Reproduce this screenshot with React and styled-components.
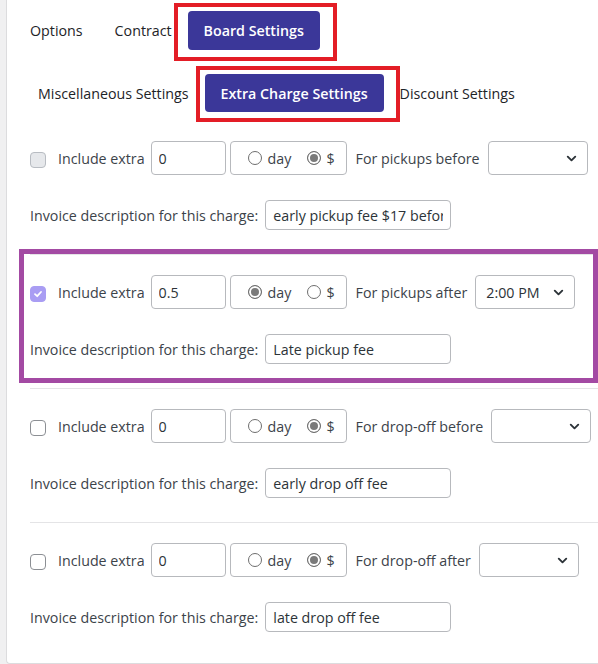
import React from 'react';
import styled, { createGlobalStyle } from 'styled-components';
import { ChevronDown } from 'lucide-react';

const GlobalStyle = createGlobalStyle`
  html, body {
    margin: 0;
    padding: 0;
    background: #f0f0f1;
    overflow: hidden;
  }
  body {
    font-family: "Open Sans", "Noto Sans", sans-serif;
    font-size: 14.25px;
    color: #3c434a;
  }
`;

const Card = styled.div`
  margin-left: 6px;
  background: #fff;
  border: 1px solid #dcdcde;
  border-top: none;
  border-right: none;
  border-radius: 0 0 0 4px;
  padding: 11px 0 0 23px;
`;

const TabRow = styled.div`
  display: flex;
  margin-left: ${props => props.$indent}px;
  margin-top: ${props => props.$top || 0}px;
`;

const Tab = styled.div`
  position: relative;
  height: ${props => props.$height}px;
  padding: 0 16px;
  display: flex;
  align-items: center;
  border-radius: 4px;
  white-space: nowrap;
  background: ${props => (props.$active ? '#3b3799' : 'transparent')};
  color: ${props => (props.$active ? '#fff' : '#1d2327')};
  font-weight: ${props => (props.$active ? 600 : 400)};

  ${props => props.$mark && `
    &::after {
      content: '';
      position: absolute;
      top: -${props.$mark[0]}px;
      right: -${props.$mark[1]}px;
      bottom: -${props.$mark[2]}px;
      left: -${props.$mark[3]}px;
      border: 4px solid #e31d26;
    }
  `}
`;

const Sections = styled.div`
  margin-top: 9px;
`;

const Section = styled.div`
  position: relative;
  padding: 20px 0 24px;
  border-bottom: 1px solid #e4e4e6;

  &:last-child {
    border-bottom: none;
    padding-bottom: 31px;
  }

  ${props => props.$highlight && `
    &::after {
      content: '';
      position: absolute;
      top: -6px;
      left: -11px;
      right: 0;
      bottom: 5px;
      border: 5px solid #a34aa3;
    }
  `}
`;

const Row = styled.div`
  display: flex;
  align-items: center;
  height: 34px;
`;

const InvoiceRow = styled.div`
  display: flex;
  align-items: center;
  height: 30px;
  margin-top: 25px;
`;

const Check = styled.span`
  flex: none;
  width: 16px;
  height: 16px;
  box-sizing: border-box;
  border-radius: 4px;
  margin-top: 3px;
  display: flex;
  align-items: center;
  justify-content: center;
  background: ${props => (props.$state === 'checked' ? '#a99df3' : props.$state === 'disabled' ? '#e6e8eb' : '#fff')};
  border: 1px solid ${props => (props.$state === 'checked' ? '#a99df3' : props.$state === 'disabled' ? '#b8bcc2' : '#8c8f94')};
`;

const Label = styled.span`
  margin-left: ${props => props.$left || 0}px;
  margin-right: ${props => props.$right || 0}px;
  white-space: nowrap;
`;

const TextInput = styled.input`
  flex: none;
  box-sizing: border-box;
  width: ${props => props.$width}px;
  height: ${props => props.$height}px;
  border: 1px solid #b7b9bd;
  border-radius: 4px;
  padding: 0 7px;
  font: inherit;
  color: #2c3338;
  background: #fff;
  outline: none;
`;

const RadioGroup = styled.div`
  flex: none;
  box-sizing: border-box;
  width: 117px;
  height: 34px;
  margin-left: 4px;
  border: 1px solid #b7b9bd;
  border-radius: 4px;
  display: flex;
  align-items: center;
  padding: 0 0 0 17px;
`;

const RadioOption = styled.span`
  display: flex;
  align-items: center;
  gap: ${props => props.$gap}px;
  margin-right: ${props => props.$right || 0}px;
  color: #3c434a;
`;

const Radio = styled.span`
  width: 12px;
  height: 12px;
  border-radius: 50%;
  border: 1px solid #6e6e6e;
  background: ${props => (props.$on ? '#7a7a7a' : '#fff')};
  box-shadow: ${props => (props.$on ? 'inset 0 0 0 2px #fff' : 'none')};
`;

const SelectBox = styled.div`
  flex: none;
  box-sizing: border-box;
  width: 100px;
  height: 34px;
  border: 1px solid #b7b9bd;
  border-radius: 4px;
  display: flex;
  align-items: center;
  justify-content: space-between;
  padding: 0 8px 0 10px;
  color: #2c3338;
`;

const CheckMark = () => (
  <svg width="10" height="10" viewBox="0 0 10 10">
    <path d="M2 5.2 L4.2 7.2 L8 3" fill="none" stroke="#fff" strokeWidth="1.8" strokeLinecap="round" strokeLinejoin="round" />
  </svg>
);

const charges = [
  { check: 'disabled', amount: '0', unit: '$', label: 'For pickups before', time: '', desc: 'early pickup fee $17 before 7:00 AM' },
  { check: 'checked', amount: '0.5', unit: 'day', label: 'For pickups after', time: '2:00 PM', desc: 'Late pickup fee', highlight: true },
  { check: 'off', amount: '0', unit: '$', label: 'For drop-off before', time: '', desc: 'early drop off fee' },
  { check: 'off', amount: '0', unit: '$', label: 'For drop-off after', time: '', desc: 'late drop off fee' },
];

function ChargeSection({ charge }) {
  return (
    <Section $highlight={charge.highlight}>
      <Row>
        <Check $state={charge.check}>{charge.check === 'checked' && <CheckMark />}</Check>
        <Label $left={12} $right={6}>Include extra</Label>
        <TextInput $width={75} $height={34} defaultValue={charge.amount} readOnly />
        <RadioGroup>
          <RadioOption $gap={6} $right={16}>
            <Radio $on={charge.unit === 'day'} />day
          </RadioOption>
          <RadioOption $gap={5}>
            <Radio $on={charge.unit === '$'} />$
          </RadioOption>
        </RadioGroup>
        <Label $left={9} $right={8}>{charge.label}</Label>
        <SelectBox>
          <span>{charge.time}</span>
          <ChevronDown size={15} strokeWidth={3} color="#2c3338" />
        </SelectBox>
      </Row>
      <InvoiceRow>
        <Label $right={7}>Invoice description for this charge:</Label>
        <TextInput $width={186} $height={30} defaultValue={charge.desc} readOnly />
      </InvoiceRow>
    </Section>
  );
}

export default function App() {
  return (
    <>
      <GlobalStyle />
      <Card>
        <TabRow $indent={-16}>
          <Tab $height={39}>Options</Tab>
          <Tab $height={39}>Contract</Tab>
          <Tab $height={39} $active $mark={[8, 17, 11, 14]}>Board Settings</Tab>
        </TabRow>
        <TabRow $indent={-8} $top={24}>
          <Tab $height={38}>Miscellaneous Settings</Tab>
          <Tab $height={38} $active $mark={[8, 16, 10, 9]}>Extra Charge Settings</Tab>
          <Tab $height={38}>Discount Settings</Tab>
        </TabRow>
        <Sections>
          {charges.map((charge, index) => (
            <ChargeSection charge={charge} key={'charge' + index} />
          ))}
        </Sections>
      </Card>
    </>
  );
}
